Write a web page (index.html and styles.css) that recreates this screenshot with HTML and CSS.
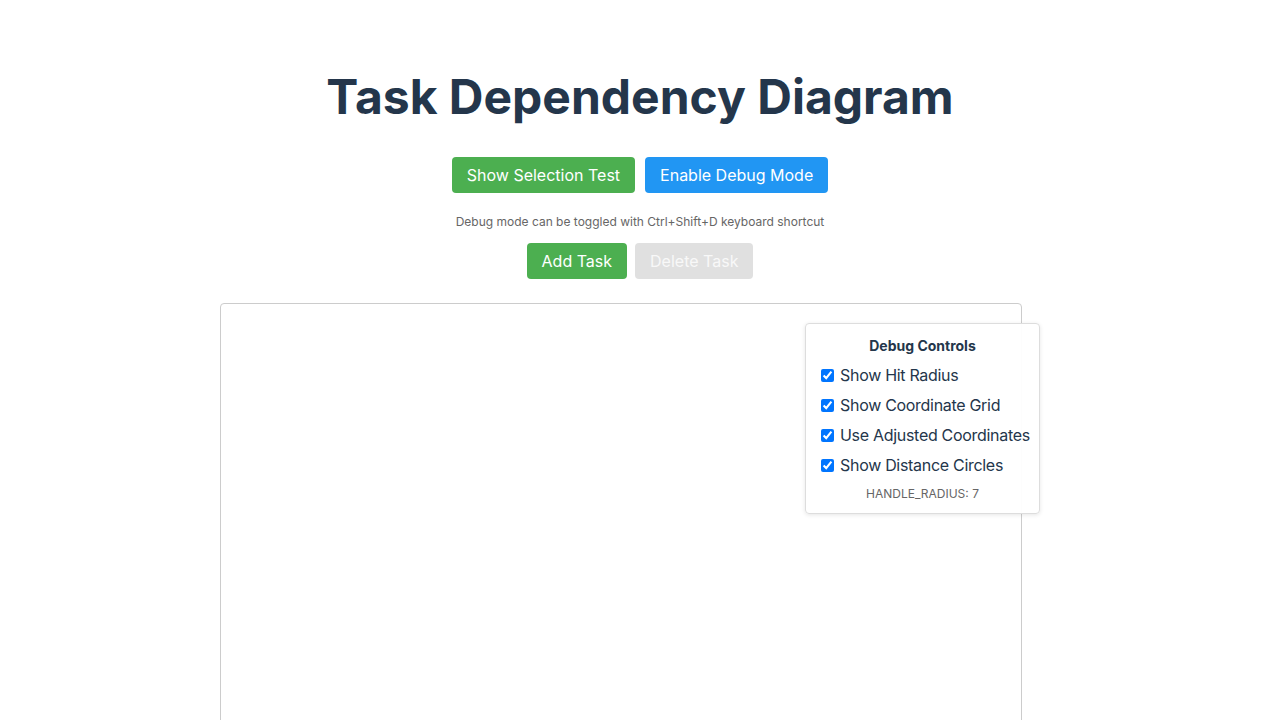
FILE: index.html
```html
<!DOCTYPE html>
<html lang="en">
<head>
<meta charset="utf-8">
<title>Task Dependency Diagram</title>
<link rel="stylesheet" href="styles.css">
</head>
<body>
<div class="app">
  <h1 class="title">Task Dependency Diagram</h1>
  <div class="btn-row top-row">
    <button class="btn btn-green">Show Selection Test</button>
    <button class="btn btn-blue">Enable Debug Mode</button>
  </div>
  <p class="hint">Debug mode can be toggled with Ctrl+Shift+D keyboard shortcut</p>
  <div class="btn-row task-row">
    <button class="btn btn-green">Add Task</button>
    <button class="btn btn-disabled" disabled>Delete Task</button>
  </div>
  <div class="canvas"></div>
</div>
<div class="debug-panel">
  <div class="debug-title">Debug Controls</div>
  <label class="debug-item"><input type="checkbox" checked> Show Hit Radius</label>
  <label class="debug-item"><input type="checkbox" checked> Show Coordinate Grid</label>
  <label class="debug-item"><input type="checkbox" checked> Use Adjusted Coordinates</label>
  <label class="debug-item"><input type="checkbox" checked> Show Distance Circles</label>
  <div class="debug-foot">HANDLE_RADIUS: 7</div>
</div>
</body>
</html>
```
FILE: styles.css
```css
* { box-sizing: border-box; }
html, body { margin: 0; padding: 0; background: #fff; }
body {
  font-family: Inter, "Helvetica Neue", Arial, sans-serif;
  color: #24364b;
}
.app {
  display: flex;
  flex-direction: column;
  align-items: center;
  padding-top: 68px;
}
.title {
  margin: 0;
  font-size: 48px;
  line-height: 58px;
  font-weight: 700;
  color: #24364b;
}
.btn-row {
  display: flex;
  gap: 10px;
  justify-content: center;
}
.top-row { margin-top: 31px; }
.task-row { margin-top: 14px; gap: 8px; }
.btn {
  font-family: inherit;
  font-size: 16px;
  line-height: 20px;
  height: 36px;
  padding: 8px 15px;
  border: none;
  border-radius: 4px;
  color: #fff;
  cursor: pointer;
}
.btn-green { background: #4caf50; }
.btn-blue { background: #2196f3; }
.btn-disabled { background: #e0e0e0; color: #f8f8f8; cursor: default; }
.hint {
  margin: 21px 0 0;
  font-size: 12px;
  line-height: 15px;
  color: #666;
}
.canvas {
  margin-top: 24px;
  margin-right: 39px;
  width: 802px;
  height: 500px;
  border: 1px solid #ccc;
  border-radius: 4px;
  background: #fff;
}
.debug-panel {
  position: absolute;
  top: 323px;
  left: 805px;
  width: 235px;
  padding: 13px 15px 12px;
  background: rgba(255, 255, 255, 0.95);
  border: 1px solid #ddd;
  border-radius: 4px;
  box-shadow: 0 1px 4px rgba(0, 0, 0, 0.1);
}
.debug-title {
  text-align: center;
  font-size: 14px;
  font-weight: 700;
  line-height: 17px;
  margin-bottom: 6px;
  color: #24364b;
}
.debug-item {
  display: flex;
  align-items: center;
  height: 30px;
  font-size: 16px;
  letter-spacing: -0.3px;
  color: #24364b;
  white-space: nowrap;
}
.debug-item input {
  margin: 0 6px 0 0;
  width: 13px;
  height: 13px;
}
.debug-foot {
  text-align: center;
  font-size: 12px;
  line-height: 15px;
  color: #666;
  margin-top: 6px;
}
```
